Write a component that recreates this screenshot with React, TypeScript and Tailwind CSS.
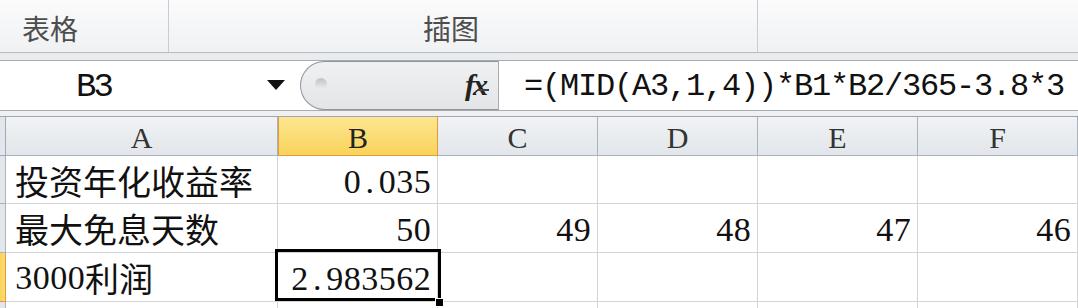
import React from "react";

const serif = "font-['Liberation_Serif','DejaVu_Serif',serif]";
const mono = "font-['Liberation_Mono','DejaVu_Sans_Mono',monospace]";
const cjk = "font-['Noto_Sans_CJK_SC','Noto_Sans',sans-serif]";

/* Half-width fixed-pitch digits, like SimSun's Latin glyphs */
function Mono({ text, cls }: { text: string; cls: string }) {
  return (
    <span className={`inline-flex whitespace-nowrap ${serif} text-[#111] ${cls}`}>
      {text.split("").map((ch, i) => (
        <span key={i} className="inline-block w-[17.5px] text-center">
          {ch}
        </span>
      ))}
    </span>
  );
}

function Num({ children }: { children: string }) {
  return <Mono text={children} cls="text-[34px] leading-none" />;
}

function Cjk({ children }: { children: React.ReactNode }) {
  return <span className={`${cjk} text-[34px] leading-none text-[#111]`}>{children}</span>;
}

const cellBase = "border-r border-b border-[#d4d4d4] flex items-center bg-white overflow-visible";
const headCell = `bg-gradient-to-b from-[#f1f3f5] to-[#e2e6ea] border-r border-b border-[#aab3bd] flex items-center justify-center ${serif} text-[30px] text-[#333] pt-[2px]`;

export default function App() {
  const cols = ["C", "D", "E", "F"];
  const row2 = ["49", "48", "47", "46"];
  return (
    <div className="w-[1078px] h-[308px] overflow-hidden bg-white relative">
      {/* Ribbon group labels */}
      <div className="h-[53px] flex bg-gradient-to-b from-[#fbfbfc] to-[#eff1f3] border-b border-[#b7bcc3]">
        <div className={`w-[169px] border-r border-[#c9cdd2] flex items-center pl-[22px] pt-[4px] ${cjk} text-[28px] text-[#4d4d4d]`}>
          表格
        </div>
        <div className={`w-[589px] border-r border-[#c9cdd2] flex items-center pl-[254px] pt-[4px] ${cjk} text-[28px] text-[#4d4d4d]`}>
          插图
        </div>
        <div className="flex-1" />
      </div>
      <div className="h-[7px] bg-[#e9ecef]" />
      {/* Formula bar */}
      <div className="h-[51px] flex border-t border-b border-[#a7acb3] bg-white">
        <div className="w-[300px] flex items-center">
          <div className={`pl-[76px] w-[262px] pt-[2px] ${mono} text-[34px] leading-none tracking-[-3px] text-[#111]`}>
            B3
          </div>
          <svg width="18" height="11" viewBox="0 0 18 11" className="ml-[5px]">
            <path d="M0 0 L18 0 L9 10 Z" fill="#111" />
          </svg>
        </div>
        <div className="w-[198px] relative flex items-center rounded-l-[25px] border border-r-0 border-[#8e949b] bg-gradient-to-b from-[#f0f1f2] to-[#e3e5e7]">
          <div className="absolute left-[14px] top-[16px] w-[12px] h-[12px] rounded-full bg-gradient-to-b from-[#bfc1c4] to-[#eef0f1]" />
          <div className="ml-auto mr-[12px] relative">
            <span className={`${serif} italic font-bold text-[30px] leading-none text-[#222] tracking-[-2px]`}>fx</span>
            <div className="absolute left-[13px] top-[19px] w-[11px] h-[2px] bg-[#444]" />
          </div>
        </div>
        <div className="flex-1 border-l border-[#a7acb3] flex items-center pl-[25px] pt-[2px]">
          <span className={`inline-flex whitespace-nowrap ${mono} text-[32px] leading-none text-[#111]`}>
            {"=(MID(A3,1,4))*B1*B2/365-3.8*3".split("").map((ch, i) => (
              <span key={i} className="inline-block w-[18px] text-center">
                {ch}
              </span>
            ))}
          </span>
        </div>
      </div>
      <div className="h-[6px] bg-[#eef0f2] border-b border-[#9ea6b0]" />
      {/* Grid */}
      <div className="grid grid-cols-[6px_272px_160px_160px_160px_160px_160px] grid-rows-[39px_48px_49px_49px_20px]">
        {/* header row */}
        <div className="bg-[#e3e7eb] border-r border-b border-[#9eaab6]" />
        <div className={headCell}>A</div>
        <div className={`bg-gradient-to-b from-[#fde68e] to-[#f9d35a] border border-t-0 border-[#e49a3a] flex items-center justify-center ${serif} text-[30px] text-[#222] pt-[2px]`}>
          B
        </div>
        {cols.map((c) => (
          <div key={c} className={headCell}>
            {c}
          </div>
        ))}

        {/* row 1 */}
        <div className="bg-[#e3e7eb] border-r border-b border-[#aab3bd]" />
        <div className={`${cellBase} pl-[9px] pt-[2px]`}>
          <Cjk>投资年化收益率</Cjk>
        </div>
        <div className={`${cellBase} justify-end pr-[6px] pt-[4px]`}>
          <Num>0.035</Num>
        </div>
        {cols.map((c) => (
          <div key={c} className={cellBase} />
        ))}

        {/* row 2 */}
        <div className="bg-[#e3e7eb] border-r border-b border-[#aab3bd]" />
        <div className={`${cellBase} pl-[9px] pt-[2px]`}>
          <Cjk>最大免息天数</Cjk>
        </div>
        <div className={`${cellBase} justify-end pr-[6px] pt-[4px]`}>
          <Num>50</Num>
        </div>
        {row2.map((v) => (
          <div key={v} className={`${cellBase} justify-end pr-[6px] pt-[4px]`}>
            <Num>{v}</Num>
          </div>
        ))}

        {/* row 3 */}
        <div className="bg-gradient-to-r from-[#f9d35a] to-[#fbdd72] border-r border-b border-[#e49a3a]" />
        <div className={`${cellBase} pl-[9px] pt-[2px]`}>
          <Mono text="3000" cls="text-[34px] leading-none" />
          <Cjk>利润</Cjk>
        </div>
        <div className={`${cellBase} justify-end pr-[6px] pt-[4px] relative`}>
          <Num>2.983562</Num>
          <div className="absolute left-[-3px] top-[-4px] w-[166px] h-[52px] border-[3px] border-black pointer-events-none" />
          <div className="absolute right-[-7px] bottom-[-6px] w-[9px] h-[9px] bg-black border border-white" />
        </div>
        {cols.map((c) => (
          <div key={c} className={cellBase} />
        ))}

        {/* row 4 */}
        <div className="bg-[#e3e7eb] border-r border-[#aab3bd]" />
        {["A", "B", ...cols].map((c) => (
          <div key={c} className="border-r border-[#d4d4d4] bg-white" />
        ))}
      </div>
    </div>
  );
}
